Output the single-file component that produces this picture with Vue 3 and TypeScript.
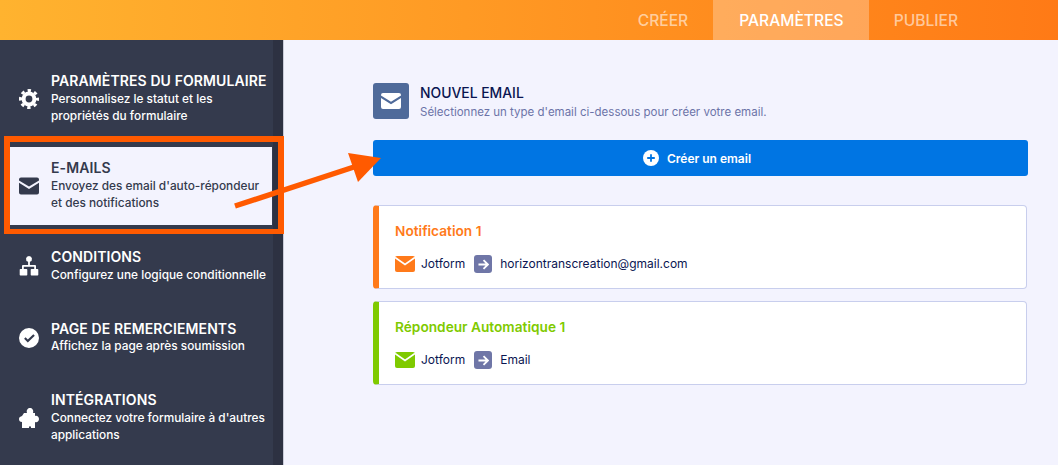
<script setup lang="ts">
interface NavItem { title: string; desc: string[]; icon: string; active?: boolean }
const items: NavItem[] = [
  { title: 'PARAMÈTRES DU FORMULAIRE', desc: ['Personnalisez le statut et les', 'propriétés du formulaire'], icon: 'gear' },
  { title: 'E-MAILS', desc: ["Envoyez des email d'auto-répondeur", 'et des notifications'], icon: 'mail', active: true },
  { title: 'CONDITIONS', desc: ['Configurez une logique conditionnelle'], icon: 'tree' },
  { title: 'PAGE DE REMERCIEMENTS', desc: ['Affichez la page après soumission'], icon: 'check' },
  { title: 'INTÉGRATIONS', desc: ["Connectez votre formulaire à d'autres", 'applications'], icon: 'puzzle' },
]
const cards = [
  { title: 'Notification 1', to: 'horizontranscreation@gmail.com', tone: 'orange' },
  { title: 'Répondeur Automatique 1', to: 'Email', tone: 'green' },
]
</script>

<template>
  <div class="page">
    <header class="top">
      <a class="tab">CRÉER</a>
      <a class="tab on">PARAMÈTRES</a>
      <a class="tab">PUBLIER</a>
    </header>
    <div class="body">
      <aside class="side">
        <div v-for="item in items" :key="item.title" class="row" :class="{ active: item.active }">
          <svg class="ico" viewBox="0 0 20 20" fill="currentColor">
            <g v-if="item.icon === 'gear'">
              <circle cx="10" cy="10" r="8.500" fill="none" stroke="currentColor" stroke-width="3" stroke-dasharray="3.340 3.340" stroke-dashoffset="1.670" />
              <circle cx="10" cy="10" r="5.400" fill="none" stroke="currentColor" stroke-width="4" />
            </g>
            <path v-else-if="item.icon === 'mail'" d="M2 1.500h16a2 2 0 0 1 2 2v.9L10 10.600 0 4.400v-.9a2 2 0 0 1 2-2zM0 6.800l10 6.200 10-6.200v9.700a2 2 0 0 1-2 2H2a2 2 0 0 1-2-2z" />
            <path v-else-if="item.icon === 'tree'" d="M10 0a3 3 0 0 1 .9 5.860V9H16a1 1 0 0 1 1 1v3h1.500a.8.8 0 0 1 .8.800v5a.8.8 0 0 1-.8.800h-6a.8.8 0 0 1-.8-.800v-5a.8.8 0 0 1 .8-.800h2.700v-2.300H4.800V13h2.700a.8.8 0 0 1 .8.800v5a.8.8 0 0 1-.8.800h-6a.8.8 0 0 1-.8-.800v-5a.8.8 0 0 1 .8-.800H3v-3a1 1 0 0 1 1-1h5.100V5.860A3 3 0 0 1 10 0z" />
            <path v-else-if="item.icon === 'check'" fill-rule="evenodd" d="M10 0a10 10 0 1 1 0 20 10 10 0 0 1 0-20zm4.300 6.300L8.800 11.400 6.600 9.300 5.100 10.800l3.700 3.700 7-6.700z" />
            <path v-else d="M8 5C7 2 9 0 11 0s4 2 3 5h2v3c2-1 4 1 4 3s-2 4-4 3v6h-4c.5-2.500-2.500-2.500-2 0H3v-6c-2 0-3-1-3-3s1.500-2.500 3-3l2-3z" />
          </svg>
          <div class="txt">
            <div class="ttl">{{ item.title }}</div>
            <div v-for="line in item.desc" :key="line" class="dsc">{{ line }}</div>
          </div>
        </div>
      </aside>

      <main class="main">
        <div class="head">
          <span class="badge">
            <svg width="20" height="16" viewBox="0 0 20 16" fill="#fff"><path d="M2 0h16a2 2 0 0 1 2 2v.6L10 8.800 0 2.600V2a2 2 0 0 1 2-2zM0 5l10 6.200L20 5v9a2 2 0 0 1-2 2H2a2 2 0 0 1-2-2z" /></svg>
          </span>
          <div class="h-b">
            <div class="h-t">NOUVEL EMAIL</div>
            <div class="h-d">Sélectionnez un type d'email ci-dessous pour créer votre email.</div>
          </div>
        </div>
        <button class="cta">
          <svg width="16" height="16" viewBox="0 0 16 16"><circle cx="8" cy="8" r="8" fill="#fff" /><path d="M8 4.200v7.600M4.200 8h7.600" stroke="#0075e3" stroke-width="1.800" /></svg>
          Créer un email
        </button>
        <section v-for="c in cards" :key="c.title" class="card" :class="c.tone">
          <div class="c-t">{{ c.title }}</div>
          <div class="c-r">
            <svg class="c-m" width="20" height="16" viewBox="0 0 20 16">
              <rect width="20" height="16" rx="2" fill="currentColor" />
              <path d="M0 1.500l10 7 10-7" fill="none" stroke="#fff" stroke-width="1.800" />
            </svg>
            <span>Jotform</span>
            <span class="arr">
              <svg width="11" height="11" viewBox="0 0 12 12" fill="none" stroke="#fff" stroke-width="2"><path d="M.5 6h10M6 1.200 10.800 6 6 10.800" /></svg>
            </span>
            <span>{{ c.to }}</span>
          </div>
        </section>
      </main>
    </div>

    <div class="frame"></div>
    <svg class="pointer" width="160" height="70" viewBox="0 0 160 70">
      <path d="M3 64 125 24" stroke="#ff5a00" stroke-width="5.500" fill="none" />
      <path d="M149 16 116 11l10 29z" fill="#ff5a00" />
    </svg>
  </div>
</template>

<style>
body { margin: 0; }
</style>

<style scoped>
.page { position: relative; width: 1058px; height: 465px; overflow: hidden; background: #f3f3fe; font-family: Inter, "Noto Sans", sans-serif; }
.top { height: 40px; display: flex; justify-content: flex-end; padding-right: 100px; background: linear-gradient(90deg, #ffb32f 0%, #ff7a16 100%); }
.tab { display: flex; align-items: center; padding: 0 25px; font-size: 15.600px; font-weight: 500; color: rgba(255,255,255,.58); }
.tab:last-child { padding-right: 0; }
.tab.on { color: #fff; background: rgba(255,255,255,.28); padding: 0 25px 0 26px; }
.body { display: flex; height: 425px; }
.side { width: 273px; border-right: 10px solid #2d3142; box-shadow: 1px 0 0 #c9cbd8; background: #343a4d; color: #fff; padding-top: 20px; display: flex; flex-direction: column; flex: none; }
.row { display: flex; align-items: center; padding: 12px 0 12px 19px; gap: 12px; margin-top: 11.500px; }
.row:first-child { margin-top: 0; }
.row.active { background: #f3f3fe; color: #343a4d; margin: 9.500px 1px 0 10px; padding-left: 9px; }
.ico { width: 20px; height: 20px; flex: none; }
.ttl { font-size: 14px; line-height: 18px; margin-bottom: .5px; font-weight: 600; letter-spacing: .1px; white-space: nowrap; }
.dsc { font-size: 11.850px; line-height: 17.500px; font-weight: 500; white-space: nowrap; }
.main { flex: 1; padding: 43px 30px 0 90px; }
.head { display: flex; align-items: center; gap: 11px; height: 36px; }
.badge { width: 36px; height: 36px; border-radius: 3px; background: #4f6a9a; display: flex; align-items: center; justify-content: center; }
.h-b { padding-top: 2px; }
.h-t { font-size: 13.900px; line-height: 19px; font-weight: 500; color: #0a1551; white-space: nowrap; }
.h-d { font-size: 11.500px; line-height: 18px; color: #6c73a8; white-space: nowrap; }
.cta { margin-top: 21px; width: 100%; height: 36px; padding: 0 7px 0 0; border: 0; border-radius: 3px; background: #0075e3; color: #fff; font: 600 12px Inter, sans-serif; display: flex; align-items: center; justify-content: center; gap: 8px; }
.card { margin: 12px 1px 0 0; height: 84px; box-sizing: border-box; background: #fff; border: 1px solid #c8ceed; border-left-width: 6px; border-radius: 4px; padding: 16px 16px 0 16px; color: #0a1551; }
.cta + .card { margin-top: 29px; }
.card.orange { border-left-color: #ff7a1a; --tone: #ff7a1a; }
.card.green { border-left-color: #7fca00; --tone: #7fca00; }
.c-t { font-size: 13.700px; line-height: 18px; font-weight: 600; color: var(--tone); }
.c-r { display: flex; align-items: center; gap: 6px; margin-top: 15px; font-size: 12px; line-height: 18px; }
.c-m { color: var(--tone); }
.arr { width: 18px; height: 18px; border-radius: 3px; background: #6f76a7; display: flex; align-items: center; justify-content: center; margin: 0 2px 0 3px; }
.frame { position: absolute; left: 4px; top: 136px; width: 280px; height: 98px; box-sizing: border-box; border: 6px solid #ff5a00; border-bottom-width: 5px; }
.pointer { position: absolute; left: 232px; top: 142px; }
</style>
